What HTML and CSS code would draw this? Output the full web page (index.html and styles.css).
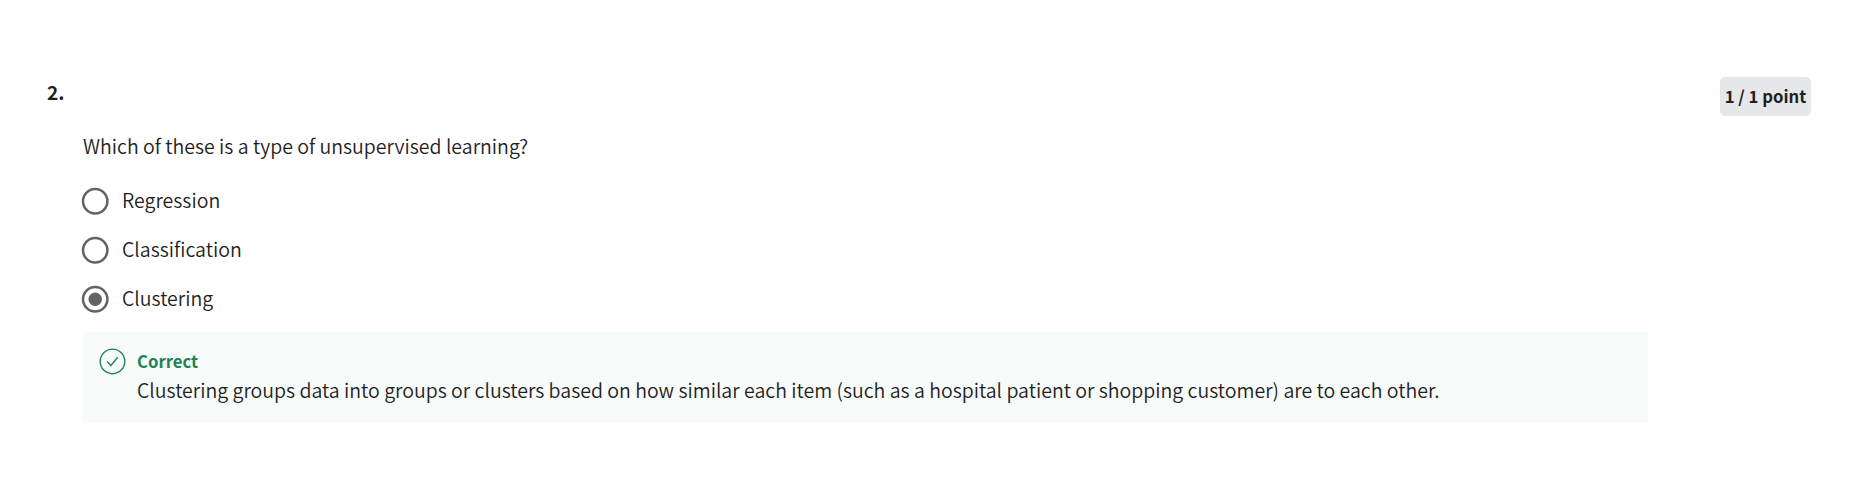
FILE: index.html
```html
<!DOCTYPE html>
<html lang="en">
<head>
<meta charset="utf-8">
<title>Quiz question</title>
<link rel="stylesheet" href="styles.css">
</head>
<body>
<main class="question">
  <header class="question-header">
    <h2 class="number">2.</h2>
    <span class="points">1 / 1 point</span>
  </header>
  <section class="content">
    <p class="prompt"><span>Which of these is a type of unsupervised learning?</span></p>
    <div class="options">
      <div class="option">
        <svg class="radio" viewBox="0 0 28 28"><circle class="ring" cx="14" cy="14" r="12.2"/></svg>
        <span class="label">Regression</span>
      </div>
      <div class="option">
        <svg class="radio" viewBox="0 0 28 28"><circle class="ring" cx="14" cy="14" r="12.2"/></svg>
        <span class="label">Classification</span>
      </div>
      <div class="option">
        <svg class="radio" viewBox="0 0 28 28"><circle class="ring" cx="14" cy="14" r="12.2"/><circle class="dot" cx="14" cy="14" r="6.7"/></svg>
        <span class="label">Clustering</span>
      </div>
    </div>
    <div class="feedback">
      <svg class="check" viewBox="0 0 28 28"><circle cx="14" cy="14" r="12.3"/><path d="M8.5 14.2 12.4 18 19.2 9.8"/></svg>
      <div class="feedback-body">
        <p class="verdict"><span>Correct</span></p>
        <p class="explanation"><span>Clustering groups data into groups or clusters based on how similar each item (such as a hospital patient or shopping customer) are to each other.</span></p>
      </div>
    </div>
  </section>
</main>
</body>
</html>
```
FILE: styles.css
```css
* { box-sizing: border-box; }
body {
  margin: 0;
  background: #fff;
  color: #1f1f1f;
  font-family: "Noto Sans CJK SC", "Noto Sans", sans-serif;
  font-size: 19.53px;
  font-weight: 350;
  line-height: 27px;
}
p, h2 { margin: 0; }
.question { padding: 77px 55px 0 46px; }
.question-header {
  display: flex;
  justify-content: space-between;
  align-items: flex-start;
  height: 55px;
}
.number { padding-left: 1px; font-size: 19.2px; font-weight: 700; line-height: 30px; }
.points {
  width: 91px;
  height: 39px;
  border-radius: 5px;
  background: #e5e7e8;
  font-size: 16.7px;
  font-weight: 700;
  line-height: 39px;
  text-align: center;
  white-space: nowrap;
}
.content { width: 1602px; padding-left: 37px; }
.prompt { height: 55px; }
.options { height: 145px; margin-left: -2px; }
.option {
  display: flex;
  align-items: flex-start;
  gap: 13px;
  height: 28px;
  margin-bottom: 21px;
}
.label { line-height: 26px; }
.radio { width: 28px; height: 28px; overflow: visible; flex: none; }
.ring, .dot { transform: translate(0.2px, 0.3px); }
.ring { fill: none; stroke: #636363; stroke-width: 2.5; }
.dot { fill: #636363; }
.feedback {
  display: flex;
  gap: 11px;
  height: 91px;
  padding: 15px 15px 0;
  background: #f7fbfa;
}
.check {
  width: 28px;
  height: 28px;
  flex: none;
  fill: none;
  stroke: #1f8354;
  stroke-width: 1.4;
}
.check > * { transform: translate(0.5px, 0.4px); }
.verdict { color: #1f8354; font-size: 16.7px; font-weight: 700; line-height: 28px; }
.explanation { line-height: 29px; white-space: nowrap; }
```
